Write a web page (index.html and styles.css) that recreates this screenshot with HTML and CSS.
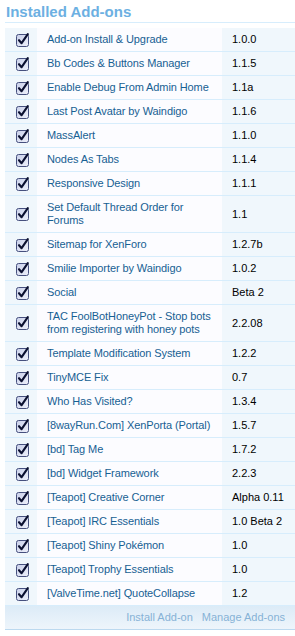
FILE: index.html
```html
<!DOCTYPE html>
<html lang="en">
<head>
    <meta charset="UTF-8">
    <meta name="viewport" content="width=device-width, initial-scale=1.0">
    <title>Installed Add-ons</title>
    <link rel="stylesheet" href="styles.css">
</head>
<body>
    <div class="panel">
        <h3 class="panel-heading">Installed Add-ons</h3>

        <table class="addons">
            <tbody id="addonRows"></tbody>
        </table>

        <div class="panel-footer">
            <a href="#">Install Add-on</a>
            <a href="#">Manage Add-ons</a>
        </div>
    </div>

    <script>
        const addons = [
            ['Add-on Install & Upgrade', '1.0.0'],
            ['Bb Codes & Buttons Manager', '1.1.5'],
            ['Enable Debug From Admin Home', '1.1a'],
            ['Last Post Avatar by Waindigo', '1.1.6'],
            ['MassAlert', '1.1.0'],
            ['Nodes As Tabs', '1.1.4'],
            ['Responsive Design', '1.1.1'],
            ['Set Default Thread Order for Forums', '1.1'],
            ['Sitemap for XenForo', '1.2.7b'],
            ['Smilie Importer by Waindigo', '1.0.2'],
            ['Social', 'Beta 2'],
            ['TAC FoolBotHoneyPot - Stop bots from registering with honey pots', '2.2.08'],
            ['Template Modification System', '1.2.2'],
            ['TinyMCE Fix', '0.7'],
            ['Who Has Visited?', '1.3.4'],
            ['[8wayRun.Com] XenPorta (Portal)', '1.5.7'],
            ['[bd] Tag Me', '1.7.2'],
            ['[bd] Widget Framework', '2.2.3'],
            ['[Teapot] Creative Corner', 'Alpha 0.11'],
            ['[Teapot] IRC Essentials', '1.0 Beta 2'],
            ['[Teapot] Shiny Pokémon', '1.0'],
            ['[Teapot] Trophy Essentials', '1.0'],
            ['[ValveTime.net] QuoteCollapse', '1.2']
        ];

        const checkIcon = `
            <svg class="check" width="14" height="14" viewBox="0 0 14 14">
                <defs>
                    <linearGradient id="boxFill" x1="0" y1="0" x2="1" y2="1">
                        <stop offset="0" stop-color="#c9d0ea"/>
                        <stop offset="1" stop-color="#eef0fa"/>
                    </linearGradient>
                </defs>
                <rect x="0.5" y="1.5" width="12" height="12" rx="2" fill="url(#boxFill)" stroke="#46507e"/>
                <path d="M3 7.2 L5.6 10.2 L11.8 1.2" fill="none" stroke="#0b1030" stroke-width="2.1" stroke-linejoin="round" stroke-linecap="round"/>
            </svg>`;

        const rows = document.getElementById('addonRows');
        addons.forEach(([title, version]) => {
            const tr = document.createElement('tr');
            tr.innerHTML = `
                <td class="col-check">${checkIcon}</td>
                <td class="col-title"><a href="#"></a></td>
                <td class="col-version"></td>
            `;
            tr.querySelector('a').textContent = title;
            tr.querySelector('.col-version').textContent = version;
            rows.appendChild(tr);
        });
    </script>
</body>
</html>
```

FILE: styles.css
```css
* {
    box-sizing: border-box;
    margin: 0;
    padding: 0;
}
body {
    font-family: 'Liberation Sans', Arial, sans-serif;
    font-size: 11px;
    color: #141414;
    background: #fff;
    padding: 0 0 0 5px;
    overflow: hidden;
}
.panel {
    width: 300px;
}
.panel-heading {
    font-size: 15px;
    font-weight: bold;
    line-height: 18px;
    color: #6cb0e2;
    padding: 3px 0 1px 1px;
    border-bottom: 1px solid #d7edfc;
    margin-bottom: 5px;
}
.addons {
    width: 100%;
    border-collapse: collapse;
    table-layout: fixed;
}
.addons td {
    border-bottom: 1px solid #d7edfc;
    padding: 5px 10px;
    line-height: 13px;
    vertical-align: middle;
}
.col-check {
    width: 32px;
    background: #f0f7fc;
    text-align: center;
    padding: 0 !important;
}
.check {
    display: block;
    margin: 0 auto 0 11px;
}
.addons .col-title {
    width: 185px;
    background: #fcfcff;
    padding-right: 0;
    letter-spacing: -0.1px;
}
.col-title a {
    color: #176093;
    text-decoration: none;
}
.col-version {
    background: #f0f7fc;
    color: #000;
}
.panel-footer {
    display: flex;
    justify-content: flex-end;
    gap: 9px;
    width: 290px;
    padding: 5px 10px 5px 0;
    line-height: 13px;
    background: linear-gradient(to bottom, #dcebf7, #eef5fb);
    border-bottom: 1px solid #bcd9ef;
}
.panel-footer a {
    color: #86b2d6;
    text-decoration: none;
}
```
